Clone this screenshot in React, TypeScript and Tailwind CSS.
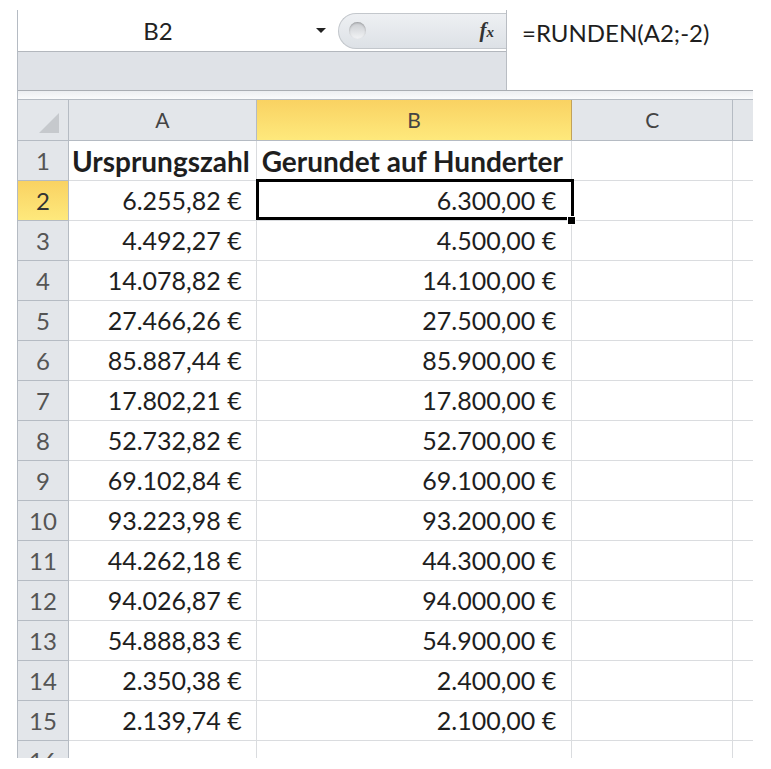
const rows: [string, string][] = [
  ["6.255,82 €", "6.300,00 €"],
  ["4.492,27 €", "4.500,00 €"],
  ["14.078,82 €", "14.100,00 €"],
  ["27.466,26 €", "27.500,00 €"],
  ["85.887,44 €", "85.900,00 €"],
  ["17.802,21 €", "17.800,00 €"],
  ["52.732,82 €", "52.700,00 €"],
  ["69.102,84 €", "69.100,00 €"],
  ["93.223,98 €", "93.200,00 €"],
  ["44.262,18 €", "44.300,00 €"],
  ["94.026,87 €", "94.000,00 €"],
  ["54.888,83 €", "54.900,00 €"],
  ["2.350,38 €", "2.400,00 €"],
  ["2.139,74 €", "2.100,00 €"],
];

const font = { fontFamily: "Lato, 'Noto Sans', sans-serif" };

function FormulaBar() {
  return (
    <div className="flex h-[81px] shrink-0 border-b border-[#a9adb3]">
      <div className="flex w-[489px] flex-col border-r border-[#b9bdc3]">
        <div className="flex h-[42px] shrink-0 items-center border-b border-[#b3b7bd] bg-white">
          <div className="flex w-[280px] justify-center text-[24px] text-[#222]">B2</div>
          <div className="ml-[18px] h-0 w-0 border-x-[5px] border-t-[5px] border-x-transparent border-t-[#222]" />
          <div className="ml-[12px] flex h-[36px] flex-1 items-center rounded-l-full border-y border-l border-[#c3c7cc] bg-gradient-to-b from-[#eef0f3] to-[#dde1e6] pl-[10px]">
            <div className="h-[17px] w-[17px] rounded-full bg-gradient-to-b from-[#c9ccd0] to-[#f3f4f6] shadow-[inset_0_1px_2px_rgba(0,0,0,0.25)]" />
            <span
              className="ml-auto mr-[12px] text-[21px] font-bold italic text-[#333]"
              style={{ fontFamily: "'Liberation Serif', serif" }}
            >
              f<span className="text-[15px]">x</span>
            </span>
          </div>
        </div>
        <div className="flex-1 bg-[#dfe2e7]" />
      </div>
      <div className="flex-1 bg-white pl-[15px] pt-[5px] text-[24px] text-[#1e1e1e]">=RUNDEN(A2;-2)</div>
    </div>
  );
}

function HeaderRow() {
  const base = "flex h-full items-center justify-center border-r border-[#b5bbc3] text-[21px] text-[#444]";
  return (
    <div className="flex h-[42px] shrink-0 border-y border-[#b5bbc3] bg-[#e3e6ea]">
      <div className={`${base} relative w-[51px]`}>
        <div className="absolute bottom-[7px] right-[9px] h-0 w-0 border-b-[20px] border-l-[20px] border-b-[#c6c9cd] border-l-transparent" />
      </div>
      <div className={`${base} w-[188px]`}>A</div>
      <div className={`${base} w-[316px] border-[#c2a25a] bg-gradient-to-b from-[#f9d262] to-[#fee97c] text-[#333]`}>B</div>
      <div className={`${base} w-[161px]`}>C</div>
      <div className={`${base} w-[20px] border-r-0`} />
    </div>
  );
}

function Row({ n, a, b, bold, selected }: { n: number; a?: string; b?: string; bold?: boolean; selected?: boolean }) {
  const cell = "flex h-full items-center border-r border-b border-[#dadcdf]";
  return (
    <div className="flex h-[40px] shrink-0">
      <div
        className={`flex h-full w-[51px] items-center justify-center border-r border-b border-[#b5bbc3] text-[24px] ${
          selected ? "bg-gradient-to-b from-[#f9d262] to-[#fee97c] text-[#333]" : "bg-[#e3e6ea] text-[#555]"
        }`}
      >
        {n}
      </div>
      <div className={`${cell} w-[188px] ${bold ? "pl-[3px] text-[28px] font-bold" : "justify-end pr-[14px]"}`}>{a}</div>
      <div className={`${cell} relative w-[316px] ${bold ? "pl-[5px] text-[28px] font-bold" : "justify-end pr-[15px]"}`}>
        {b}
        {selected && (
          <>
            <div className="absolute -left-[1px] -top-[2px] z-10 h-[41px] w-[318px] border-[3px] border-black" />
            <div className="absolute -bottom-[5px] -right-[5px] z-20 h-[9px] w-[9px] border border-white bg-black" />
          </>
        )}
      </div>
      <div className={`${cell} w-[161px]`} />
      <div className="h-full w-[20px] border-b border-[#dadcdf]" />
    </div>
  );
}

export default function App() {
  return (
    <div className="h-[769px] w-[771px] bg-white pl-[17px] pt-[10px]" style={font}>
      <div className="flex h-[748px] w-[736px] flex-col overflow-hidden border-l border-[#b5bbc3] text-[25px] text-[#1e1e1e]">
        <FormulaBar />
        <div className="h-[8px] shrink-0 bg-gradient-to-b from-[#eceef1] to-[#fafbfc]" />
        <HeaderRow />
        <Row n={1} a="Ursprungszahl" b="Gerundet auf Hunderter" bold />
        {rows.map(([a, b], i) => (
          <Row key={i} n={i + 2} a={a} b={b} selected={i === 0} />
        ))}
        <Row n={16} />
      </div>
    </div>
  );
}
